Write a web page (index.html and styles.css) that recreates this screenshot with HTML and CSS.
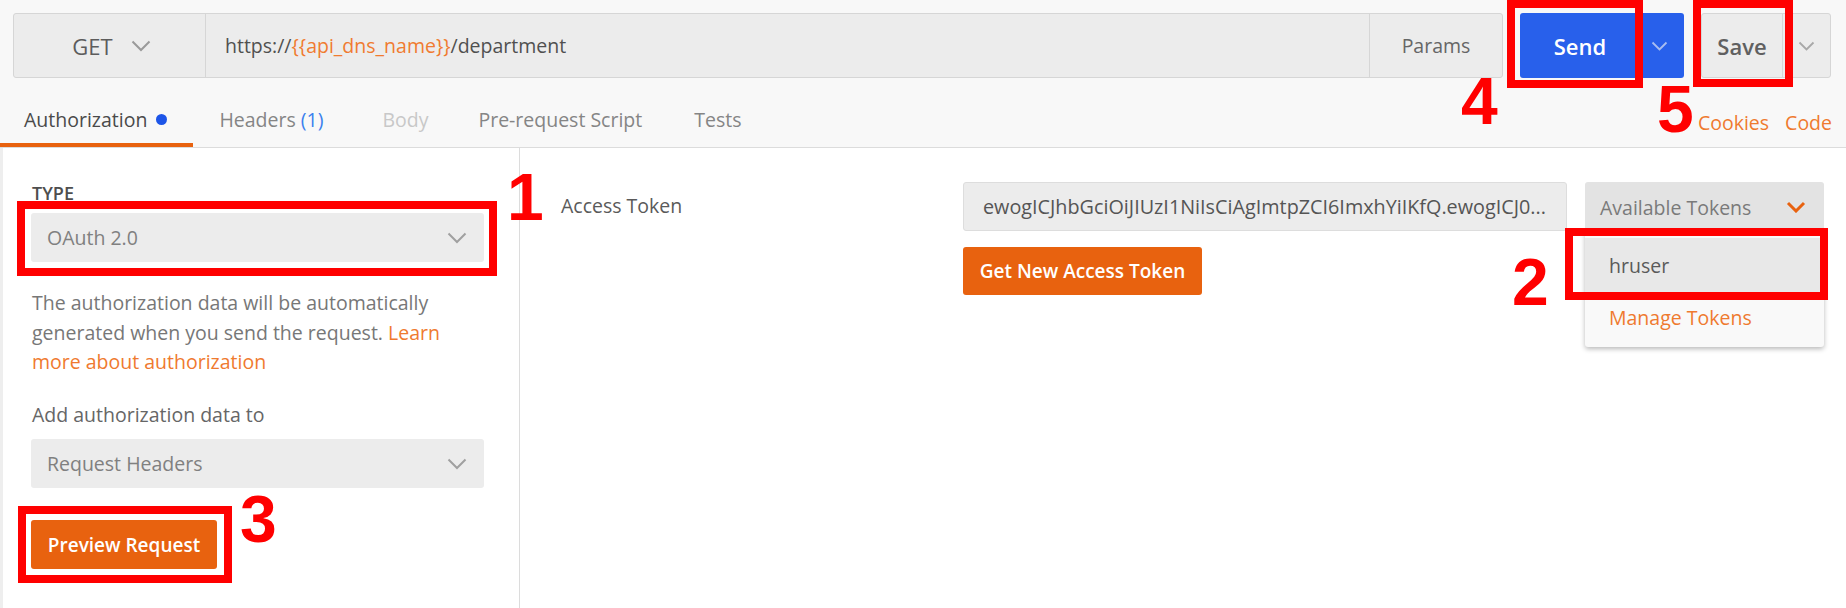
FILE: index.html
```html
<!DOCTYPE html>
<html lang="en">
<head>
<meta charset="utf-8">
<title>Postman - Authorization</title>
<link rel="stylesheet" href="styles.css">
</head>
<body>
<div class="app">
  <header class="top">
    <div class="url-row">
      <div class="url-bar">
        <div class="method">
          <span>GET</span>
          <svg class="chev" width="20" height="12" viewBox="0 0 20 12"><polyline points="1.5,1.5 10,10 18.5,1.5" fill="none" stroke="currentColor" stroke-width="2"/></svg>
        </div>
        <div class="url">https://<span class="var">{{api_dns_name}}</span>/department</div>
        <div class="params">Params</div>
      </div>
      <div class="send-group">
        <button class="send">Send</button>
        <button class="send-more"><svg width="17" height="10" viewBox="0 0 17 10"><polyline points="1.5,1.5 8.5,8.5 15.5,1.5" fill="none" stroke="currentColor" stroke-width="1.8"/></svg></button>
      </div>
      <div class="save-group">
        <button class="save">Save</button>
        <button class="save-more"><svg width="17" height="10" viewBox="0 0 17 10"><polyline points="1.5,1.5 8.5,8.5 15.5,1.5" fill="none" stroke="currentColor" stroke-width="1.8"/></svg></button>
      </div>
    </div>
    <nav class="tabs">
      <div class="tab active">Authorization<span class="dot"></span></div>
      <div class="tab">Headers <span class="count">(1)</span></div>
      <div class="tab disabled">Body</div>
      <div class="tab">Pre-request Script</div>
      <div class="tab">Tests</div>
      <div class="tab-links">
        <span class="link">Cookies</span>
        <span class="link">Code</span>
      </div>
    </nav>
  </header>

  <main class="main">
    <aside class="auth-side">
      <div class="field-label">TYPE</div>
      <div class="select">
        <span>OAuth 2.0</span>
        <svg class="chev" width="20" height="12" viewBox="0 0 20 12"><polyline points="1.5,1.5 10,10 18.5,1.5" fill="none" stroke="currentColor" stroke-width="2"/></svg>
      </div>
      <p class="desc">The authorization data will be automatically generated when you send the request. <span class="link">Learn more about authorization</span></p>
      <div class="sub-label">Add authorization data to</div>
      <div class="select">
        <span>Request Headers</span>
        <svg class="chev" width="20" height="12" viewBox="0 0 20 12"><polyline points="1.5,1.5 10,10 18.5,1.5" fill="none" stroke="currentColor" stroke-width="2"/></svg>
      </div>
      <button class="btn-orange preview">Preview Request</button>
    </aside>

    <section class="auth-main">
      <div class="token-row">
        <div class="token-label">Access Token</div>
        <div class="token-col">
          <div class="token-input">ewogICJhbGciOiJIUzI1NiIsCiAgImtpZCI6ImxhYiIKfQ.ewogICJ0...</div>
          <button class="btn-orange get-token">Get New Access Token</button>
        </div>
        <div class="tokens-dd">
          <div class="tokens-toggle">
            <span>Available Tokens</span>
            <svg width="20" height="12" viewBox="0 0 20 12"><polyline points="2,2 10,10 18,2" fill="none" stroke="currentColor" stroke-width="3"/></svg>
          </div>
          <div class="tokens-menu">
            <div class="menu-item hl">hruser</div>
            <div class="menu-item link">Manage Tokens</div>
          </div>
        </div>
      </div>
    </section>
  </main>

  <div class="mark mark1"></div>
  <div class="mark mark2"></div>
  <div class="mark mark3"></div>
  <div class="mark mark4"></div>
  <div class="mark mark5"></div>
  <div class="num num1">1</div>
  <div class="num num2">2</div>
  <div class="num num3">3</div>
  <div class="num num4">4</div>
  <div class="num num5">5</div>
</div>
</body>
</html>
```

FILE: styles.css
```css
* { box-sizing: border-box; }

html, body {
  margin: 0;
  padding: 0;
  background: #ffffff;
}

body {
  font-family: "Open Sans", "DejaVu Sans", sans-serif;
  font-size: 19.5px;
  color: #505050;
}

button {
  font-family: inherit;
  border: 0;
  margin: 0;
  padding: 0;
  background: none;
  cursor: pointer;
}

.app {
  position: relative;
  width: 1846px;
  height: 608px;
  overflow: hidden;
}

/* ---------- top bar ---------- */
.top {
  background: #f8f8f8;
}

.url-row {
  display: flex;
  padding: 13px 15px 0 13px;
}

.url-bar {
  flex: 1;
  display: flex;
  height: 65px;
  border: 1px solid #d6d6d6;
  border-radius: 3px;
  background: #ececec;
}

.method {
  width: 192px;
  border-right: 1px solid #d6d6d6;
  display: flex;
  align-items: center;
  justify-content: center;
  gap: 18px;
  font-size: 22px;
  color: #5c5c5c;
  padding-left: 4px;
}

.method .chev { color: #9a9a9a; }

.url {
  flex: 1;
  display: flex;
  align-items: center;
  padding-left: 19px;
  color: #505050;
  white-space: pre;
}

.url .var { color: #f07b30; }

.params {
  width: 133px;
  border-left: 1px solid #d6d6d6;
  display: flex;
  align-items: center;
  justify-content: center;
  color: #666666;
}

.send-group {
  margin-left: 17px;
  width: 164px;
  height: 65px;
  display: flex;
  background: #2860eb;
  border-radius: 3px;
}

.send {
  width: 120px;
  color: #ffffff;
  font-size: 22px;
  font-weight: 600;
}

.send-more {
  flex: 1;
  display: flex;
  align-items: center;
  justify-content: center;
  color: #a9bdf0;
  padding-right: 6px;
}

.save-group {
  margin-left: 17px;
  width: 130px;
  height: 65px;
  display: flex;
  border: 1px solid #d6d6d6;
  border-radius: 3px;
  background: #ececec;
}

.save {
  width: 81px;
  border-right: 1px solid #d6d6d6;
  color: #606060;
  font-size: 22px;
  font-weight: 600;
}

.save-more {
  flex: 1;
  display: flex;
  align-items: center;
  justify-content: center;
  color: #a8a8a8;
}

/* ---------- tabs ---------- */
.tabs {
  display: flex;
  height: 70px;
  border-bottom: 1px solid #dcdcdc;
}

.tab {
  height: 69px;
  display: flex;
  align-items: center;
  padding: 17px 26px 0;
  border-bottom: 4px solid transparent;
  color: #858585;
  white-space: pre;
}

.tab.active {
  padding-left: 24px;
  padding-right: 26px;
  color: #4a4a4a;
  border-bottom-color: #e8620f;
}

.tab.disabled {
  color: #c8c8c8;
  padding-left: 33px;
  padding-right: 24px;
}

.tab .count { color: #3b80ee; }

.dot {
  width: 11px;
  height: 11px;
  margin-left: 9px;
  border-radius: 50%;
  background: #1d55e8;
}

.tab-links {
  margin-left: auto;
  display: flex;
  align-items: center;
  gap: 16px;
  padding: 20px 14px 0 0;
}

.link { color: #ef7a2f; }

/* ---------- main ---------- */
.main {
  display: flex;
  height: 460px;
  box-shadow: inset 3px 0 0 #eeeeee;
}

.auth-side {
  width: 520px;
  border-right: 1px solid #dcdcdc;
  padding: 34px 35px 0 31px;
}

.field-label {
  font-size: 18px;
  line-height: 22px;
  font-weight: 600;
  color: #4e4e4e;
  margin-bottom: 9px;
  padding-left: 1px;
}

.select {
  height: 49px;
  display: flex;
  align-items: center;
  justify-content: space-between;
  padding: 0 17px 0 16px;
  background: #ececec;
  border-radius: 3px;
  color: #808080;
}

.select .chev { color: #a0a0a0; }

.desc {
  margin: 26px 0 0;
  padding: 0 8px 0 1px;
  line-height: 29.5px;
  color: #777777;
}

.sub-label {
  margin-top: 23px;
  line-height: 29.5px;
  color: #666666;
  margin-bottom: 10px;
  padding-left: 1px;
}

.btn-orange {
  display: flex;
  align-items: center;
  justify-content: center;
  height: 49px;
  border-radius: 3px;
  background: #e8620f;
  color: #ffffff;
  font-size: 19px;
  font-weight: 600;
}

.preview {
  margin-top: 32px;
  width: 186px;
}

.auth-main {
  flex: 1;
  padding: 34px 22px 0 41px;
}

.token-row {
  display: flex;
  align-items: flex-start;
}

.token-label {
  width: 402px;
  height: 49px;
  display: flex;
  align-items: center;
  color: #5a5a5a;
  padding-bottom: 2px;
}

.token-col {
  width: 604px;
  display: flex;
  flex-direction: column;
  gap: 16px;
}

.token-input {
  height: 49px;
  line-height: 47px;
  padding: 0 12px 0 19px;
  border: 1px solid #dddddd;
  border-radius: 3px;
  background: #ececec;
  color: #555555;
  font-size: 19.8px;
  white-space: nowrap;
  overflow: hidden;
}

.get-token {
  width: 239px;
  height: 48px;
}

.tokens-dd {
  position: relative;
  margin-left: 18px;
  width: 239px;
}

.tokens-toggle {
  height: 50px;
  display: flex;
  align-items: center;
  justify-content: space-between;
  padding: 0 18px 0 15px;
  background: #e3e3e3;
  border-radius: 3px 3px 0 0;
  color: #7a7a7a;
}

.tokens-toggle svg { color: #e8620f; }

.tokens-menu {
  position: absolute;
  top: 100%;
  left: 0;
  right: 0;
  padding: 6px 0 5px;
  background: #f9f9f9;
  border-radius: 0 0 3px 3px;
  box-shadow: 0 2px 5px rgba(0, 0, 0, 0.28);
}

.menu-item {
  display: flex;
  align-items: center;
  padding-left: 24px;
}

.menu-item.hl {
  height: 54px;
  background: #e8e8e8;
  color: #5a5a5a;
}

.menu-item.link {
  height: 50px;
}

/* ---------- red annotations (overlay) ---------- */
.mark {
  position: absolute;
  border: 8px solid #ff0000;
}

.mark1 { left: 17px; top: 201px; width: 480px; height: 75px; }
.mark2 { left: 1565px; top: 228px; width: 263px; height: 72px; }
.mark3 { left: 18px; top: 506px; width: 214px; height: 77px; }
.mark4 { left: 1507px; top: 0; width: 136px; height: 88px; }
.mark5 { left: 1693px; top: 0; width: 100px; height: 87px; }

.num {
  position: absolute;
  font-family: "Liberation Sans", Arial, sans-serif;
  font-weight: 700;
  font-size: 66px;
  line-height: 66px;
  color: #ff0000;
}

.num1 { left: 507px; top: 164px; }
.num2 { left: 1512px; top: 249px; }
.num3 { left: 240px; top: 486px; }
.num4 { left: 1461px; top: 68px; }
.num5 { left: 1657px; top: 76px; }
```
